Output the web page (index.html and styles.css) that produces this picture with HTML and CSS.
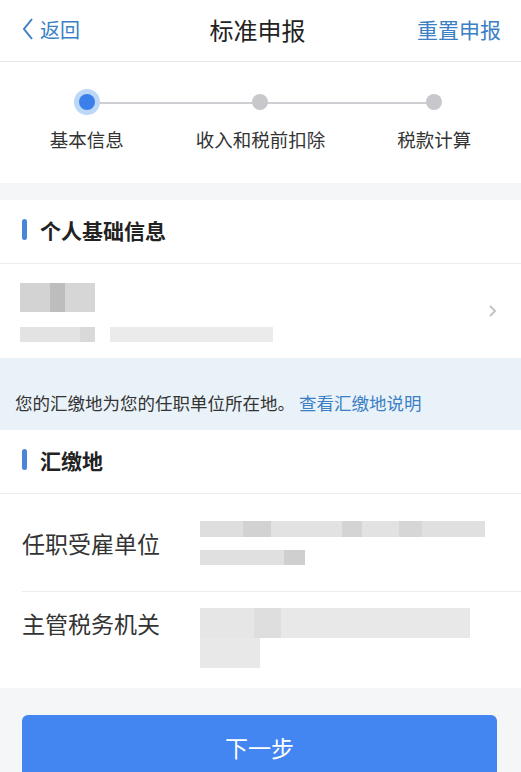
FILE: index.html
```html
<!DOCTYPE html>
<html lang="zh-CN">
<head>
    <meta charset="UTF-8">
    <meta name="viewport" content="width=device-width, initial-scale=1.0">
    <title>标准申报</title>
    <link rel="stylesheet" href="styles.css">
</head>
<body>

<header class="topbar">
    <a class="back">
        <svg width="12" height="24" viewBox="0 0 12 24"><path d="M10 2 L2 12 L10 22" fill="none" stroke="#3b7fc4" stroke-width="2"/></svg>
        <span>返回</span>
    </a>
    <h1>标准申报</h1>
    <a class="reset">重置申报</a>
</header>

<section class="steps">
    <div class="step active"><span class="dot"></span><span class="label">基本信息</span></div>
    <div class="step"><span class="dot"></span><span class="label">收入和税前扣除</span></div>
    <div class="step last"><span class="dot"></span><span class="label">税款计算</span></div>
</section>

<section class="panel">
    <div class="panel-title">个人基础信息</div>
    <div class="person-row">
        <div class="person-info">
            <div class="blur blur-name"></div>
            <div class="blur-line">
                <div class="blur blur-a"></div>
                <div class="blur blur-b"></div>
            </div>
        </div>
        <svg class="arrow" width="9" height="14" viewBox="0 0 9 14"><path d="M2 2 L7 7 L2 12" fill="none" stroke="#c4c4c4" stroke-width="2"/></svg>
    </div>
</section>

<div class="notice">您的汇缴地为您的任职单位所在地。 <a>查看汇缴地说明</a></div>

<section class="panel">
    <div class="panel-title">汇缴地</div>
    <div class="field">
        <div class="field-name">任职受雇单位</div>
        <div class="field-value">
            <div class="blur blur-long"></div>
            <div class="blur blur-short"></div>
        </div>
    </div>
    <div class="field field-top">
        <div class="field-name">主管税务机关</div>
        <div class="field-value">
            <div class="blur blur-tax"></div>
            <div class="blur blur-tax2"></div>
        </div>
    </div>
</section>

<div class="footer">
    <button class="next">下一步</button>
</div>

</body>
</html>
```

FILE: styles.css
```css
body {
    margin: 0;
    padding: 0;
    font-family: "Noto Sans CJK SC", "Noto Sans", sans-serif;
    background: #f5f6f8;
    color: #333;
}
.topbar {
    background: #fff;
    border-bottom: 1px solid #e6e6e6;
    display: flex;
    align-items: center;
    justify-content: space-between;
    padding: 0 20px 3px 22px;
    box-sizing: border-box;
    height: 62px;
}
.topbar h1 {
    margin: 0;
    font-size: 24px;
    font-weight: normal;
    color: #222;
    padding-left: 18px;
}
.back {
    display: flex;
    align-items: center;
    gap: 6px;
    color: #3b7fc4;
    font-size: 20px;
}
.reset {
    color: #3b7fc4;
    font-size: 21px;
}
.steps {
    background: #fff;
    height: 121px;
    display: grid;
    grid-template-columns: repeat(3, 1fr);
}
.step {
    position: relative;
    display: flex;
    flex-direction: column;
    align-items: center;
    padding-top: 32px;
}
.step::after {
    content: "";
    position: absolute;
    top: 40px;
    left: 50%;
    width: 100%;
    height: 2px;
    background: #cfcfd3;
}
.step.last::after {
    display: none;
}
.dot {
    width: 16px;
    height: 16px;
    border-radius: 50%;
    background: #c8c8cc;
    position: relative;
    z-index: 1;
}
.step.active .dot {
    background: #3b80ea;
    box-shadow: 0 0 0 5px #bcd8f6;
}
.label {
    margin-top: 16px;
    font-size: 18.5px;
    color: #333;
}
.panel {
    background: #fff;
    margin-top: 17px;
}
.notice + .panel {
    margin-top: 0;
}
.panel-title {
    height: 64px;
    box-sizing: border-box;
    padding-bottom: 4px;
    border-bottom: 1px solid #ececec;
    display: flex;
    align-items: center;
    padding-left: 22px;
    font-size: 21px;
    font-weight: bold;
    color: #222;
}
.panel-title::before {
    content: "";
    width: 5px;
    height: 21px;
    border-radius: 3px;
    background: #4a86d8;
    margin-right: 13px;
}
.person-row {
    height: 94px;
    display: flex;
    align-items: center;
    justify-content: space-between;
    padding: 0 24px 0 20px;
}
.person-info {
    display: flex;
    flex-direction: column;
    gap: 15px;
    padding-top: 2px;
}
.blur {
    background: #e6e6e6;
}
.blur-name {
    width: 75px;
    height: 29px;
    background: linear-gradient(90deg, #d3d3d3 0 40%, #bdbdbd 40% 60%, #d6d6d6 60%);
}
.blur-line {
    display: flex;
    gap: 15px;
}
.blur-a {
    width: 75px;
    height: 15px;
    background: linear-gradient(90deg, #e3e3e3 0 80%, #d9d9d9 80%);
}
.blur-b {
    width: 163px;
    height: 15px;
    background: #ebebeb;
}
.notice {
    height: 72px;
    box-sizing: border-box;
    padding-top: 16px;
    background: #eaf2f9;
    display: flex;
    align-items: center;
    padding-left: 15px;
    font-size: 17.5px;
    color: #333;
    white-space: pre;
}
.notice a {
    color: #3b7fc4;
}
.field {
    height: 97px;
    margin-left: 22px;
    display: flex;
    align-items: center;
    border-bottom: 1px solid #ececec;
}
.field-top {
    border-bottom: none;
    height: 96px;
    box-sizing: border-box;
    align-items: flex-start;
    padding-top: 14px;
}
.field-name {
    width: 178px;
    font-size: 23px;
    color: #333;
}
.field-value {
    display: flex;
    flex-direction: column;
    gap: 13px;
}
.blur-long {
    width: 285px;
    height: 16px;
    background: linear-gradient(90deg, #dedede 0 15%, #d2d2d2 15% 25%, #e2e2e2 25% 50%, #d4d4d4 50% 57%, #e2e2e2 57% 70%, #d6d6d6 70% 78%, #e0e0e0 78%);
}
.blur-short {
    width: 105px;
    height: 15px;
    background: linear-gradient(90deg, #e0e0e0 0 80%, #cfcfcf 80%);
}
.field-top .field-value {
    padding-top: 2px;
}
.blur-tax {
    width: 270px;
    height: 30px;
    background: linear-gradient(90deg, #e6e6e6 0 20%, #dedede 20% 30%, #e8e8e8 30%);
}
.blur-tax2 {
    width: 60px;
    height: 30px;
    margin-top: -13px;
    background: #e8e8e8;
}
.footer {
    padding: 27px 24px 0 22px;
}
.next {
    width: 100%;
    height: 66px;
    border: none;
    border-radius: 6px;
    background: #4386f2;
    color: #fff;
    font-family: inherit;
    font-size: 23px;
    padding-bottom: 4px;
}
```
